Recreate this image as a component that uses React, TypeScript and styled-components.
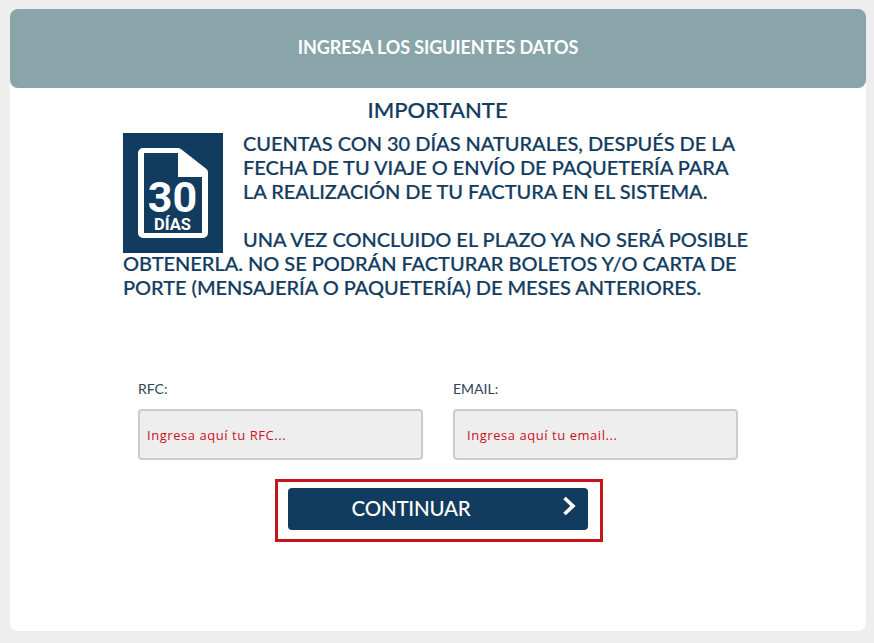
import React from "react";
import styled, { createGlobalStyle } from "styled-components";

const Global = createGlobalStyle`
  html, body { margin: 0; padding: 0; background: #eeeeee; }
  body { font-family: Lato, "Open Sans", sans-serif; width: 874px; height: 643px; overflow: hidden; }
  * { box-sizing: border-box; }
`;
const Page = styled.div`
  padding: 9px 8px 12px 10px;
  height: 643px;
`;
const Card = styled.main`
  background: #fff;
  border-radius: 8px;
  height: 622px;
  display: flex;
  flex-direction: column;
`;
const Header = styled.header`
  height: 79px;
  background: #89a5aa;
  border-radius: 8px;
  display: flex;
  align-items: center;
  justify-content: center;
  color: #fff;
  font-size: 18px;
  font-weight: 700;
  letter-spacing: -0.12px;
  padding-bottom: 3px;
  flex: none;
`;
const Notice = styled.section`
  width: 634px;
  margin: 10px 0 0 113px;
  color: #123c5f;
  -webkit-text-stroke: 0.2px #123c5f;
`;
const Title = styled.h2`
  margin: 0 0 9px;
  font-size: 22px;
  font-weight: 500;
  line-height: 24px;
  text-align: center;
  padding-right: 5px;
`;
const Badge = styled.div`
  float: left;
  width: 100px;
  height: 120px;
  margin: 2px 20px -4px 0;
  background: #123c5f;
`;
const BadgeIcon = styled.svg`
  width: 100px;
  height: 120px;
  display: block;
`;
const BadgeNum = styled.text`
  font-family: Roboto, "Liberation Sans", sans-serif;
  font-weight: 700;
  fill: #fff;
  stroke: none;
  text-anchor: middle;
`;
const Body = styled.p`
  margin: 0;
  font-size: 20px;
  font-weight: 500;
  line-height: 24px;
  letter-spacing: -0.03px;
`;
const Fields = styled.div`
  display: flex;
  gap: 30px;
  margin: 81px 0 0 128px;
`;
const Field = styled.label`
  display: flex;
  flex-direction: column;
  width: 285px;
  color: #2e4656;
  font-size: 14px;
`;
const FieldLabel = styled.span`
  line-height: 17px;
  margin-bottom: 12px;
`;
const Input = styled.div<{ $inset: number }>`
  height: 51px;
  background: #eeeeee;
  border: 2px solid #c9ccd0;
  border-radius: 4px;
  display: flex;
  align-items: center;
  padding: 0 ${(p) => p.$inset}px;
  color: #cc1122;
  font-family: "Open Sans", sans-serif;
  font-size: 13px;
  letter-spacing: 0.55px;
`;
const Highlight = styled.div`
  align-self: flex-start;
  margin: 19px 0 0 265px;
  width: 328px;
  height: 63px;
  border: 3px solid #c4141c;
  display: flex;
  align-items: center;
  justify-content: center;
  padding: 0 2px 3px 0;
`;
const Button = styled.button`
  width: 300px;
  height: 42px;
  border: none;
  border-radius: 4px;
  background: #123c5f;
  color: #fff;
  font-family: Lato, sans-serif;
  font-size: 20.5px;
  font-weight: 500;
  display: grid;
  grid-template-columns: 1fr 40px;
  align-items: center;
  padding: 0 0 2px;
`;
const ButtonLabel = styled.span`
  text-align: center;
  padding-right: 14px;
  letter-spacing: -0.2px;
`;
const Chevron = styled.svg`
  width: 14px;
  height: 20px;
  margin: -4px 0 0 14px;
  display: block;
`;

export default function App() {
  return (
    <Page>
      <Global />
      <Card>
        <Header>INGRESA LOS SIGUIENTES DATOS</Header>
        <Notice>
          <Title>IMPORTANTE</Title>
          <Badge>
            <BadgeIcon viewBox="0 0 100 120">
              <path
                d="M20 15 H55 a5 5 0 0 1 3.5 1.5 L83.5 36 a5 5 0 0 1 1.5 3.5 V100 a5 5 0 0 1 -5 5 H20 a5 5 0 0 1 -5 -5 V20 a5 5 0 0 1 5 -5 Z"
                fill="#fff"
              />
              <path d="M21 20 H55 V44 H79 V100 H21 Z" fill="#123c5f" />
              <BadgeNum x="49.5" y="79" fontSize="43">30</BadgeNum>
              <BadgeNum x="49.5" y="97" fontSize="16.5">DÍAS</BadgeNum>
            </BadgeIcon>
          </Badge>
          <Body>
            CUENTAS CON 30 DÍAS NATURALES, DESPUÉS DE LA
            <br />
            FECHA DE TU VIAJE O ENVÍO DE PAQUETERÍA PARA
            <br />
            LA REALIZACIÓN DE TU FACTURA EN EL SISTEMA.
            <br />
            <br />
            UNA VEZ CONCLUIDO EL PLAZO YA NO SERÁ POSIBLE OBTENERLA. NO SE PODRÁN FACTURAR BOLETOS Y/O CARTA DE PORTE (MENSAJERÍA O PAQUETERÍA) DE MESES ANTERIORES.
          </Body>
        </Notice>
        <Fields>
          <Field>
            <FieldLabel>RFC:</FieldLabel>
            <Input $inset={7}>Ingresa aquí tu RFC...</Input>
          </Field>
          <Field>
            <FieldLabel>EMAIL:</FieldLabel>
            <Input $inset={12}>Ingresa aquí tu email...</Input>
          </Field>
        </Fields>
        <Highlight>
          <Button>
            <ButtonLabel>CONTINUAR</ButtonLabel>
            <Chevron viewBox="0 0 14 20">
              <path d="M2.5 2 L11 10 L2.5 18" fill="none" stroke="#fff" strokeWidth="3.6" />
            </Chevron>
          </Button>
        </Highlight>
      </Card>
    </Page>
  );
}
